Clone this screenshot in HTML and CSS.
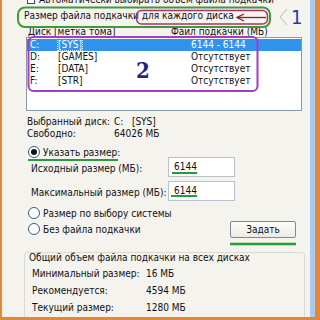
FILE: index.html
```html
<!DOCTYPE html>
<html lang="ru">
<head>
  <meta charset="UTF-8">
  <title>Виртуальная память</title>
  <link rel="stylesheet" href="styles.css">
</head>
<body>
  <div class="frame">
    <div class="dialog">
      <div class="auto-row">
        <span class="check"></span>
        <span>Автоматически выбирать объем файла подкачки</span>
      </div>

      <div class="section-title">Размер файла подкачки для каждого диска</div>

      <div class="list-head">
        <span>Диск [метка тома]</span>
        <span>Файл подкачки (МБ)</span>
      </div>

      <div class="drive-list">
        <div class="drive selected"><span class="letter">C:</span><span class="label"><span class="focus">[SYS]</span></span><span class="size">6144 - 6144</span></div>
        <div class="drive"><span class="letter">D:</span><span class="label">[GAMES]</span><span class="size">Отсутствует</span></div>
        <div class="drive"><span class="letter">E:</span><span class="label">[DATA]</span><span class="size">Отсутствует</span></div>
        <div class="drive"><span class="letter">F:</span><span class="label">[STR]</span><span class="size">Отсутствует</span></div>
      </div>

      <div class="info">
        <span>Выбранный диск:</span><span>C:&nbsp;&nbsp; [SYS]</span>
        <span>Свободно:</span><span>64026 МБ</span>
      </div>

      <div class="options">
        <div class="radio-row"><span class="radio on"></span><span>Указать размер:</span></div>
        <div class="fields">
          <div class="field-row">
            <span class="field-label">Исходный размер (МБ):</span>
            <span class="input">6144</span>
          </div>
          <div class="field-row">
            <span class="field-label">Максимальный размер (МБ):</span>
            <span class="input">6144</span>
          </div>
        </div>
        <div class="bottom-opts">
          <div class="radios">
            <div class="radio-row"><span class="radio"></span><span>Размер по выбору системы</span></div>
            <div class="radio-row"><span class="radio"></span><span>Без файла подкачки</span></div>
          </div>
          <button class="set-btn">Задать</button>
        </div>
      </div>

      <div class="group">
        <div class="group-title">Общий объем файла подкачки на всех дисках</div>
        <div class="totals">
          <span>Минимальный размер:</span><span>16 МБ</span>
          <span>Рекомендуется:</span><span>4594 МБ</span>
          <span>Текущий размер:</span><span>1280 МБ</span>
        </div>
      </div>
    </div>
    <div class="edge"></div>

    <!-- пометки поверх скриншота -->
    <svg class="marks" width="320" height="320" viewBox="0 0 320 320">
      <rect x="18" y="7.5" width="252" height="19.5" rx="7" fill="none" stroke="#3f9a3a" stroke-width="2"/>
      <rect x="136.5" y="10.5" width="131" height="13.5" rx="5" fill="none" stroke="#a8336c" stroke-width="1.5"/>
      <path d="M237 17.5 H266" stroke="#8a2020" stroke-width="1.3"/>
      <path d="M244 14 L237 17.5 L244 21" fill="none" stroke="#8a2020" stroke-width="1.3"/>
      <path d="M287 9 L280 17 L287 25" fill="none" stroke="#b8b8c0" stroke-width="1"/>
      <rect x="28.5" y="37" width="229" height="54" rx="5" fill="none" stroke="#a43cc4" stroke-width="2"/>
      <path d="M28 160 H118" stroke="#2a9a3a" stroke-width="2"/>
      <path d="M172 173 H197" stroke="#2a9a3a" stroke-width="2"/>
      <path d="M171 196 H197" stroke="#2a9a3a" stroke-width="2"/>
      <path d="M230 244 H296" stroke="#2a9a3a" stroke-width="2.5"/>
    </svg>
    <span class="num num-1">1</span>
    <span class="num num-2">2</span>
  </div>
</body>
</html>
```

FILE: styles.css
```css
* {
  box-sizing: border-box;
}

body {
  margin: 0;
  font-family: 'DejaVu Sans Condensed', 'DejaVu Sans', sans-serif;
  font-stretch: condensed;
  font-size: 10px;
  color: #111;
}

.frame {
  position: relative;
  width: 320px;
  height: 320px;
  overflow: hidden;
  display: flex;
  background: #f4f3ee;
  border-left: 2px solid #e08838;
  border-bottom: 3px solid #e08838;
  border-right: 5px solid #e08838;
}

.dialog {
  width: 308px;
  padding: 0 0 0 15px;
}

.edge {
  width: 5px;
  background: #a9c9ef;
}

.auto-row {
  display: flex;
  align-items: center;
  gap: 4px;
  height: 8px;
  margin-top: -4px;
  padding-left: 10px;
  line-height: 8px;
}

.check {
  width: 8px;
  height: 8px;
  border: 1px solid #1c5180;
  background: #fff;
}

.section-title {
  margin-top: 5px;
  padding-left: 7px;
  line-height: 13px;
}

.list-head {
  display: flex;
  padding-left: 11px;
  margin-top: 4px;
  line-height: 11px;
}

.list-head span:first-child {
  width: 143px;
}

.drive-list {
  margin: 0 0 0 9px;
  width: 276px;
  height: 74px;
  background: #fff;
  border: 1px solid #8a99aa;
  padding-top: 1px;
}

.drive {
  display: flex;
  height: 12px;
  line-height: 12px;
  padding-left: 3px;
}

.drive.selected {
  background: #3193ec;
  color: #fff;
}

.letter {
  width: 28px;
}

.label {
  width: 133px;
}

.focus {
  outline: 1px dotted #cfe4ff;
}

.info {
  display: grid;
  grid-template-columns: 87px auto;
  padding-left: 10px;
  margin-top: 5px;
  line-height: 12px;
}

.options {
  margin-top: 4px;
  padding-left: 11px;
}

.radio-row {
  display: flex;
  align-items: center;
  gap: 3px;
  height: 16px;
}

.radio {
  width: 12px;
  height: 12px;
  border-radius: 50%;
  border: 1px solid #2c5f8c;
  background: #fff;
  position: relative;
}

.radio.on::after {
  content: "";
  position: absolute;
  left: 2px;
  top: 2px;
  width: 6px;
  height: 6px;
  border-radius: 50%;
  background: #111;
}

.fields {
  margin-top: -3px;
}

.field-row {
  display: flex;
  align-items: flex-start;
  height: 24px;
  padding-left: 3px;
}

.field-label {
  width: 137px;
  padding-top: 2px;
  line-height: 20px;
}

.input {
  width: 67px;
  height: 20px;
  line-height: 18px;
  border: 1px solid #b9c2cc;
  background: #fff;
  padding-left: 5px;
}

.bottom-opts {
  display: flex;
  align-items: flex-start;
}

.radios {
  width: 202px;
}

.set-btn {
  margin-top: 16px;
  width: 66px;
  height: 17px;
  font: inherit;
  color: #111;
  border: 1px solid #7a8a99;
  border-radius: 2px;
  background: linear-gradient(#fdfdfb, #ecebe5);
  padding: 0;
}

.group {
  margin: 14px 0 0 7px;
  width: 281px;
  height: 80px;
  border: 1px solid #dcdad0;
  border-radius: 3px;
  padding: 0 0 0 4px;
}

.group-title {
  line-height: 9px;
}

.totals {
  display: grid;
  grid-template-columns: 114px auto;
  row-gap: 5px;
  margin-top: 6px;
  padding-left: 3px;
  line-height: 12px;
}

.marks {
  position: absolute;
  left: -2px;
  top: 0;
}

.num {
  position: absolute;
  color: #2838a8;
  font-family: 'DejaVu Sans', sans-serif;
  font-size: 20px;
  line-height: 20px;
}

.num-1 {
  left: 289px;
  top: 7px;
}

.num-2 {
  left: 134px;
  top: 60px;
  color: #1c2688;
  font-family: 'DejaVu Serif', serif;
  font-weight: bold;
  font-size: 22px;
}
```
